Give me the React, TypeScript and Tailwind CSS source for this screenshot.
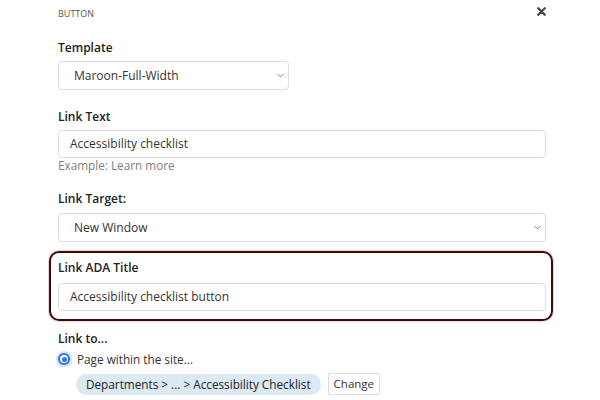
import { ChevronDown } from 'lucide-react';

function SelectBox({ value, className }: { value: string; className: string }) {
  return (
    <div
      className={`flex items-center justify-between rounded-[4px] border border-[#dedede] bg-white pl-[15px] pr-[2px] ${className}`}
    >
      <span className="text-[12px] leading-[16px] text-[#333]">{value}</span>
      <ChevronDown size={11} strokeWidth={1.6} className="text-[#555]" />
    </div>
  );
}

function TextInput({ value }: { value: string }) {
  return (
    <div className="flex h-[28px] w-full items-center rounded-[4px] border border-[#dedede] bg-white pl-[11px]">
      <span className="text-[12px] leading-[16px] text-[#333]">{value}</span>
    </div>
  );
}

function Label({ children, className = '' }: { children: React.ReactNode; className?: string }) {
  return (
    <div className={`text-[12px] font-semibold leading-[16px] text-[#222] ${className}`}>{children}</div>
  );
}

export default function App() {
  return (
    <div
      className="relative h-[400px] w-[600px] overflow-hidden bg-white"
      style={{ fontFamily: '"Open Sans", "Noto Sans", sans-serif' }}
    >
      {/* close */}
      <button className="absolute left-[537px] top-[7px] text-[#444]" aria-label="Close">
        <svg width="9" height="9" viewBox="0 0 9 9">
          <path d="M1.2 1.2 L7.8 7.8 M7.8 1.2 L1.2 7.8" stroke="currentColor" strokeWidth="2.2" strokeLinecap="round" />
        </svg>
      </button>

      <div className="ml-[58px] flex w-[488px] flex-col pt-[8px]">
        <div className="text-[9px] leading-[11px] text-[#555]">BUTTON</div>

        <Label className="mt-[21px]">Template</Label>
        <SelectBox value="Maroon-Full-Width" className="mt-[5px] h-[29px] w-[231px]" />

        <Label className="mt-[19px]">Link Text</Label>
        <div className="mt-[5px]">
          <TextInput value="Accessibility checklist" />
        </div>
        <div className="text-[11.75px] leading-[14px] text-[#808080]">Example: Learn more</div>

        <Label className="mt-[19px]">Link Target:</Label>
        <SelectBox value="New Window" className="mt-[6px] h-[29px] w-full" />

        <div className="ml-[-9px] mt-[9px] w-[504px] rounded-[10px] border-2 border-[#3d0b0b] pb-[8px] pl-[7px] pr-[5px] pt-[7px] shadow-[0_0_0_1px_rgba(190,90,90,0.25)]">
          <Label>Link ADA Title</Label>
          <div className="mt-[7px]">
            <TextInput value="Accessibility checklist button" />
          </div>
        </div>

        <Label className="mt-[10px]">Link to...</Label>
        <div className="mt-[4px] flex h-[16px] items-center gap-[7px]">
          <span className="flex h-[12px] w-[12px] items-center justify-center rounded-full bg-[#2f72e4] shadow-[0_0_0_2px_rgba(120,170,240,0.35)]">
            <span className="flex h-[8px] w-[8px] items-center justify-center rounded-full bg-white">
              <span className="h-[5px] w-[5px] rounded-full bg-[#2f72e4]" />
            </span>
          </span>
          <span className="text-[11.75px] leading-[16px] text-[#333]">Page within the site...</span>
        </div>

        <div className="ml-[18px] mt-[6px] flex items-center gap-[7px]">
          <span className="flex h-[21px] items-center rounded-full bg-[#dbe9f2] px-[10px] text-[11.75px] font-medium leading-[16px] text-[#222]">
            Departments &gt; ... &gt; Accessibility Checklist
          </span>
          <span className="flex h-[22px] items-center rounded-[2px] border border-[#dcdcdc] bg-white px-[5px] text-[11.5px] leading-[16px] text-[#333]">
            Change
          </span>
        </div>
      </div>
    </div>
  );
}
